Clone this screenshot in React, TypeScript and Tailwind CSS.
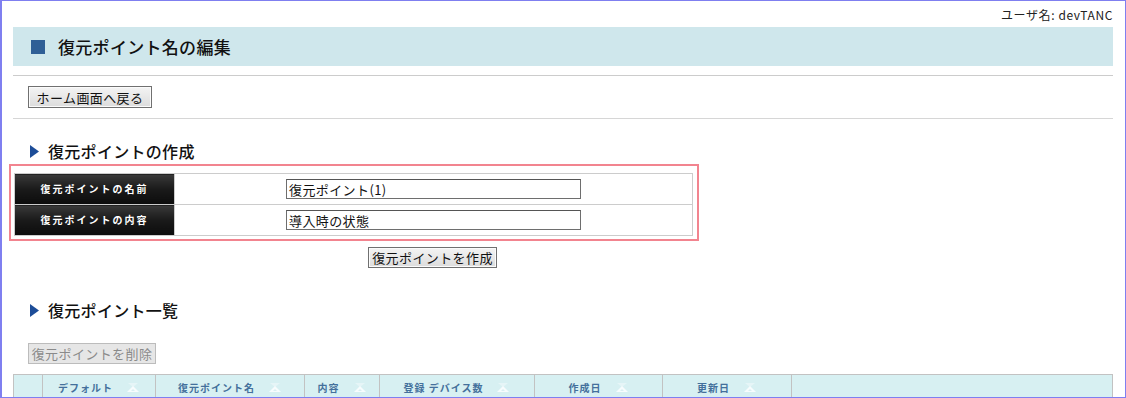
import React from "react";

const JP = "font-['MS_UI_Gothic','Noto_Sans_CJK_JP',sans-serif]";

const BTN =
  "flex items-center justify-center border border-[#707070] bg-gradient-to-b from-[#f4f4f4] to-[#dcdcdc] text-[13px] leading-none tracking-[0.4px] text-[#111] shadow-[inset_0_0_0_1px_#fbfbfb]";

function SortIcon() {
  return (
    <svg width="14" height="9" viewBox="0 0 14 9" aria-hidden="true">
      <polygon points="2,0 12,0 7,4" fill="#e6f5f7" />
      <polygon points="1,9 13,9 7,3" fill="#f7fcfd" />
      <polygon points="5,8 9,8 7,6" fill="#d9eff2" />
    </svg>
  );
}

function Section({ title, className }: { title: string; className?: string }) {
  return (
    <div className={`flex h-[20px] items-center ${className ?? ""}`}>
      <svg width="9" height="13" viewBox="0 0 9 13" className="ml-[17px]" aria-hidden="true">
        <polygon points="0,0 9,6.5 0,13" fill="#1d4d98" />
      </svg>
      <span className="ml-[9px] text-[16px] leading-none font-medium tracking-[0.3px] text-[#111]">{title}</span>
    </div>
  );
}

const rows = [
  { label: "復元ポイントの名前", value: "復元ポイント(1)" },
  { label: "復元ポイントの内容", value: "導入時の状態" },
];

const cols = [
  { w: "w-[29px]", label: "" },
  { w: "w-[113px]", label: "デフォルト" },
  { w: "w-[149px]", label: "復元ポイント名" },
  { w: "w-[75px]", label: "内容" },
  { w: "w-[155px]", label: "登録 デバイス数" },
  { w: "w-[128px]", label: "作成日" },
  { w: "w-[129px]", label: "更新日" },
];

export default function App() {
  return (
    <div
      className={`${JP} box-border h-[398px] w-[1126px] overflow-hidden border-t border-r border-b border-l-2 border-[#7f7ff0] bg-white pl-[11px] pr-[12px]`}
    >
      {/* user */}
      <div className="flex h-[26px] items-center justify-end pt-[2px] text-[12px] leading-none tracking-[0.6px] text-[#222]">
        ユーザ名: devTANC
      </div>

      {/* title bar */}
      <div className="flex h-[39px] items-center bg-[#cfe7ec]">
        <div className="ml-[18px] h-[14px] w-[14px] bg-[#2f5f96]" />
        <h1 className="ml-[13px] text-[17px] leading-none font-medium tracking-[0.3px] text-[#111]">復元ポイント名の編集</h1>
      </div>

      <div className="mt-[9px] h-px bg-[#cccccc]" />

      <button type="button" className={`${BTN} ml-[15px] mt-[10px] h-[22px] w-[124px]`}>
        ホーム画面へ戻る
      </button>

      <div className="mt-[10px] h-px bg-[#d6d6d6]" />

      <Section title="復元ポイントの作成" className="mt-[22px]" />

      {/* form */}
      <div className="ml-[-4px] mt-[3px] h-[77px] w-[690px] border-2 border-[#f2848f] pl-[3px] pt-[7px]">
        <table className="w-[679px] border-collapse border border-[#cccccc]">
          <tbody>
            {rows.map((r) => (
              <tr key={r.label} className="h-[31px]">
                <th className="w-[160px] border border-[#cccccc] bg-gradient-to-b from-[#3a3a3a] via-[#1a1a1a] to-[#0c0c0c] p-0 text-center text-[10px] leading-none font-bold tracking-[2px] text-white">
                  {r.label}
                </th>
                <td className="border border-[#cccccc] p-0">
                  <div className="flex justify-center">
                    <div className="flex h-[20px] w-[295px] items-center border border-[#6e6e6e] border-t-[#555] pl-[2px] text-[13px] leading-none tracking-[0.4px] text-[#111]">
                      {r.value}
                    </div>
                  </div>
                </td>
              </tr>
            ))}
          </tbody>
        </table>
      </div>

      <button type="button" className={`${BTN} ml-[355px] mt-[6px] h-[21px] w-[129px]`}>
        復元ポイントを作成
      </button>

      <Section title="復元ポイント一覧" className="mt-[32px]" />

      <button
        type="button"
        disabled
        className="ml-[15px] mt-[23px] flex h-[21px] w-[128px] items-center justify-center border border-[#bcbcbc] bg-[#e6e6e6] text-[13px] leading-none tracking-[0.4px] text-[#8a8a8a]"
      >
        復元ポイントを削除
      </button>

      {/* list header */}
      <div className="mt-[10px] flex h-[26px] w-[1100px] border-t border-l border-r border-[#c2c2c2] bg-[#d7f0f2]">
        {cols.map((c, i) => (
          <div
            key={i}
            className={`${c.w} flex shrink-0 items-center justify-center gap-[13px] border-r border-[#c2c2c2] text-[10px] leading-none font-bold text-[#44709c]`}
          >
            {c.label && (
              <>
                <span className="tracking-[1px]">{c.label}</span>
                <SortIcon />
              </>
            )}
          </div>
        ))}
        <div className="flex-1" />
      </div>
    </div>
  );
}
